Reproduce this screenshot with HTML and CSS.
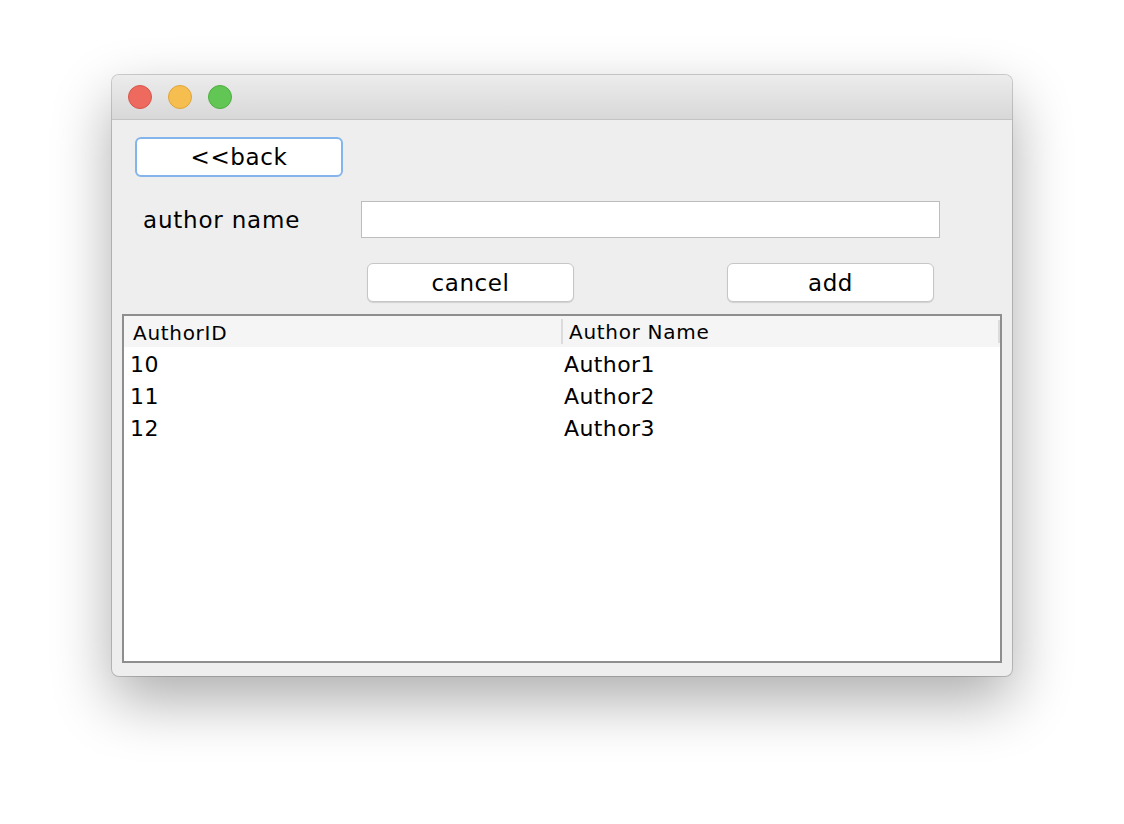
FILE: index.html
```html
<!DOCTYPE html>
<html>
<head>
<meta charset="utf-8">
<link rel="stylesheet" href="styles.css">
</head>
<body>
<div class="window">
  <div class="titlebar">
    <span class="light red"></span>
    <span class="light yellow"></span>
    <span class="light green"></span>
  </div>
  <div class="content">
    <div class="row-back">
      <button class="btn btn-focus">&lt;&lt;back</button>
    </div>
    <div class="row-name">
      <span class="label">author name</span>
      <div class="field"></div>
    </div>
    <div class="row-actions">
      <button class="btn btn-cancel">cancel</button>
      <button class="btn btn-add">add</button>
    </div>
    <div class="table">
      <div class="thead">
        <div class="th th-id">AuthorID</div>
        <div class="th th-name">Author Name</div>
        <div class="th th-end"></div>
      </div>
      <div class="tr"><div class="td td-id">10</div><div class="td td-name">Author1</div></div>
      <div class="tr"><div class="td td-id">11</div><div class="td td-name">Author2</div></div>
      <div class="tr"><div class="td td-id">12</div><div class="td td-name">Author3</div></div>
    </div>
  </div>
</div>
</body>
</html>
```
FILE: styles.css
```css
* { box-sizing: border-box; }
html, body { margin: 0; padding: 0; background: #ffffff; }
body {
  width: 1124px;
  height: 824px;
  padding: 75px 0 0 112px;
  font-family: "DejaVu Sans", "Liberation Sans", sans-serif;
  color: #000;
}
.window {
  width: 900px;
  height: 601px;
  border-radius: 7px;
  background: #eeeeee;
  box-shadow: 0 24px 60px rgba(0,0,0,0.33), 0 0 0 1px rgba(0,0,0,0.18);
  overflow: hidden;
  display: flex;
  flex-direction: column;
}
.titlebar {
  height: 45px;
  flex: none;
  background: linear-gradient(#ececec, #d8d8d8);
  border-bottom: 1px solid #c4c4c4;
  display: flex;
  align-items: center;
  padding-left: 16px;
  gap: 16px;
}
.light {
  width: 24px;
  height: 24px;
  border-radius: 50%;
  display: block;
}
.red { background: #ee6a5f; border: 1px solid #d6564c; }
.yellow { background: #f6be4f; border: 1px solid #dea53b; }
.green { background: #62c655; border: 1px solid #4eae41; }
.content {
  flex: 1;
  display: flex;
  flex-direction: column;
}
.btn {
  font-family: "DejaVu Sans", "Liberation Sans", sans-serif;
  font-size: 23px;
  letter-spacing: 0.6px;
  color: #000;
  background: #fff;
  border: 1px solid #c6c6c6;
  border-radius: 6px;
  box-shadow: 0 1px 1px rgba(0,0,0,0.12);
  padding: 0;
  margin: 0;
}
.row-back {
  padding: 17px 0 0 23px;
  display: flex;
}
.btn-focus {
  width: 208px;
  height: 40px;
  border: 2px solid #84b4ec;
  box-shadow: none;
}
.row-name {
  margin-top: 24px;
  display: flex;
  align-items: center;
  height: 37px;
}
.label {
  font-size: 23px;
  letter-spacing: 0.8px;
  width: 249px;
  padding-left: 31px;
}
.field {
  width: 579px;
  height: 37px;
  background: #fff;
  border: 1px solid #bdbdbd;
}
.row-actions {
  margin-top: 25px;
  display: flex;
  padding-left: 255px;
  gap: 153px;
}
.btn-cancel, .btn-add {
  width: 207px;
  height: 39px;
}
.table {
  margin: 12px 0 0 10px;
  width: 880px;
  height: 349px;
  border: 2px solid #8e8e8e;
  background: #fff;
}
.thead {
  height: 31px;
  background: #f5f5f5;
  display: flex;
  align-items: center;
  font-size: 20px;
  letter-spacing: 0.7px;
}
.th-id { width: 437px; padding-left: 9px; padding-top: 2px; }
.th-name {
  width: 437px;
  padding-left: 6px;
  padding-top: 2px;
  border-left: 2px solid #dcdcdc;
  line-height: 23px;
}
.th-end {
  border-left: 2px solid #dcdcdc;
  height: 23px;
}
.tr {
  height: 32px;
  display: flex;
  align-items: center;
  font-size: 22px;
  letter-spacing: 0.4px;
  padding-top: 3px;
}
.td-id { width: 434px; padding-left: 6px; }
.td-name { padding-left: 6px; }
```
